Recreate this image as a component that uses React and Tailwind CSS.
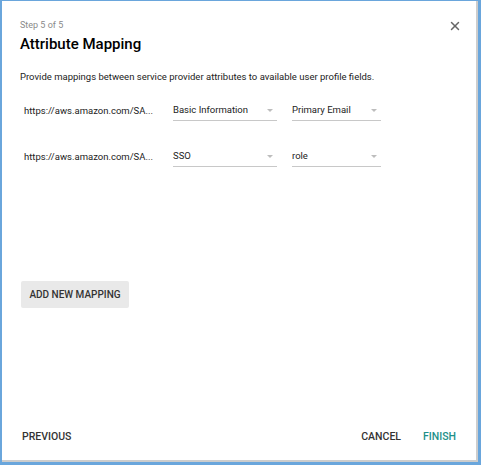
import { X } from 'lucide-react'

const rows = [
  { attr: 'https://aws.amazon.com/SAML/Attributes/RoleSessionName', section: 'Basic Information', field: 'Primary Email' },
  { attr: 'https://aws.amazon.com/SAML/Attributes/Role', section: 'SSO', field: 'role' },
]

const shorten = (s) => (s.length > 25 ? s.slice(0, 25) + '...' : s)

function Select({ value, width }) {
  return (
    <div className={`${width} flex items-center justify-between border-b border-[#c8c8c8] h-[20px]`}>
      <span className="text-[9.5px] text-[#222]">{value}</span>
      <span className="mr-[4px] w-0 h-0 border-l-[3px] border-r-[3px] border-t-[3px] border-l-transparent border-r-transparent border-t-[#bdbdbd]" />
    </div>
  )
}

export default function App() {
  return (
    <div className="w-[481px] h-[465px] bg-[#6aa6dc] pt-px pl-[2px] pr-[3px] pb-[3px] flex" style={{ fontFamily: 'Roboto, "Noto Sans", sans-serif' }}>
      <div className="flex-1 flex flex-col bg-white border-r-[2px] border-b-[2px] border-[#cdcdcd]">
        <div className="flex justify-between pl-[18px] pr-[14px] pt-[18px]">
          <div>
            <div className="text-[9px] text-[#8a8a8a] leading-[12px]">Step 5 of 5</div>
            <h1 className="text-[15px] font-medium text-black leading-[20px] mt-[3px]">Attribute Mapping</h1>
          </div>
          <button className="text-[#666] h-[14px]">
            <X className="w-[14px] h-[14px]" strokeWidth={2.5} />
          </button>
        </div>

        <p className="px-[18px] mt-[16px] text-[9.5px] text-[#222] leading-[13px]">
          Provide mappings between service provider attributes to available user profile fields.
        </p>

        <div className="flex flex-col gap-[26px] mt-[18px] pl-[22px]">
          {rows.map((r) => (
            <div key={r.attr} className="flex items-center">
              <span title={r.attr} className="w-[127px] whitespace-nowrap text-[9.5px] text-[#222]">{shorten(r.attr)}</span>
              <div className="ml-[22px]">
                <Select value={r.section} width="w-[104px]" />
              </div>
              <div className="ml-[15px]">
                <Select value={r.field} width="w-[89px]" />
              </div>
            </div>
          ))}
        </div>

        <div className="px-[19px] mt-[114px]">
          <button className="h-[27px] w-[108px] rounded-[2px] bg-[#e9e9e9] text-[10px] font-medium text-[#333] uppercase">
            Add new mapping
          </button>
        </div>

        <div className="mt-auto flex items-center justify-between pl-[20px] pr-[20px] pb-[15px]">
          <button className="text-[10.5px] font-medium text-[#333] uppercase">Previous</button>
          <div className="flex gap-[22px]">
            <button className="text-[10.5px] font-medium text-[#333] uppercase">Cancel</button>
            <button className="text-[10.5px] font-medium text-[#1e9089] uppercase">Finish</button>
          </div>
        </div>
      </div>
    </div>
  )
}
